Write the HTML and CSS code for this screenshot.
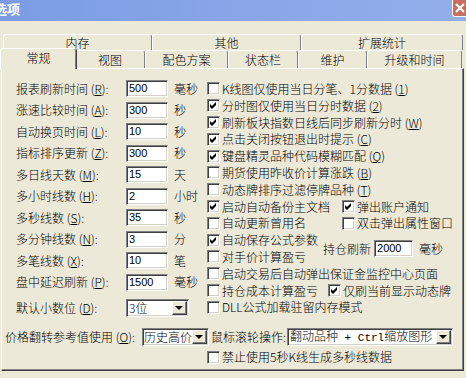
FILE: index.html
```html
<!DOCTYPE html>
<html lang="zh-CN">
<head>
<meta charset="utf-8">
<title>选项</title>
<link rel="stylesheet" href="styles.css">
</head>
<body>
<div class="window">
  <div class="titlebar">
    <span class="title">选项</span>
    <span class="close"><svg width="12" height="12" viewBox="0 0 12 12"><path d="M2 2 L10 10 M10 2 L2 10" stroke="#fff" stroke-width="2"/></svg></span>
  </div>
  <div class="tabs">
    <div class="tabrow back">
      <div class="tab">内存</div>
      <div class="tab">其他</div>
      <div class="tab">扩展统计</div>
    </div>
    <div class="tabrow front">
      <div class="tab sel">常规</div>
      <div class="tab">视图</div>
      <div class="tab">配色方案</div>
      <div class="tab">状态栏</div>
      <div class="tab">维护</div>
      <div class="tab">升级和时间</div>
    </div>
  </div>
  <div class="panel">
    <div class="cols">
      <div class="left">
        <div class="row"><span class="lbl">报表刷新时间 (<u>R</u>):</span><span class="field">500</span><span class="unit">毫秒</span></div>
        <div class="row"><span class="lbl">涨速比较时间 (<u>A</u>):</span><span class="field">300</span><span class="unit">秒</span></div>
        <div class="row"><span class="lbl">自动换页时间 (<u>L</u>):</span><span class="field">10</span><span class="unit">秒</span></div>
        <div class="row"><span class="lbl">指标排序更新 (<u>Z</u>):</span><span class="field">300</span><span class="unit">秒</span></div>
        <div class="row"><span class="lbl">多日线天数 (<u>M</u>):</span><span class="field">15</span><span class="unit">天</span></div>
        <div class="row"><span class="lbl">多小时线数 (<u>H</u>):</span><span class="field">2</span><span class="unit">小时</span></div>
        <div class="row"><span class="lbl">多秒线数 (<u>S</u>):</span><span class="field">35</span><span class="unit">秒</span></div>
        <div class="row"><span class="lbl">多分钟线数 (<u>N</u>):</span><span class="field">3</span><span class="unit">分</span></div>
        <div class="row"><span class="lbl">多笔线数 (<u>X</u>):</span><span class="field">10</span><span class="unit">笔</span></div>
        <div class="row"><span class="lbl">盘中延迟刷新 (<u>P</u>):</span><span class="field">1500</span><span class="unit">毫秒</span></div>
        <div class="row row-dec"><span class="lbl">默认小数位 (<u>D</u>):</span><span class="select s-dec"><span class="val">3位</span><span class="btn"><span class="arrow"></span></span></span></div>
      </div>
      <div class="right">
        <div class="ck"><span class="cb"></span>K线图仅使用当日分笔、1分数据 (<u>1</u>)</div>
        <div class="ck"><span class="cb on"><svg width="7" height="7" viewBox="0 0 7 7"><path d="M0 2 L2 4 L6 0 L6 3 L2 7 L0 5 Z" fill="#000"/></svg></span>分时图仅使用当日分时数据 (<u>2</u>)</div>
        <div class="ck"><span class="cb on"><svg width="7" height="7" viewBox="0 0 7 7"><path d="M0 2 L2 4 L6 0 L6 3 L2 7 L0 5 Z" fill="#000"/></svg></span>刷新板块指数日线后同步刷新分时 (<u>W</u>)</div>
        <div class="ck"><span class="cb on"><svg width="7" height="7" viewBox="0 0 7 7"><path d="M0 2 L2 4 L6 0 L6 3 L2 7 L0 5 Z" fill="#000"/></svg></span>点击关闭按钮退出时提示 (<u>C</u>)</div>
        <div class="ck"><span class="cb on"><svg width="7" height="7" viewBox="0 0 7 7"><path d="M0 2 L2 4 L6 0 L6 3 L2 7 L0 5 Z" fill="#000"/></svg></span>键盘精灵品种代码模糊匹配 (<u>Q</u>)</div>
        <div class="ck"><span class="cb"></span>期货使用昨收价计算涨跌 (<u>B</u>)</div>
        <div class="ck"><span class="cb"></span>动态牌排序过滤停牌品种 (<u>T</u>)</div>
        <div class="pair">
          <div class="ck first"><span class="cb on"><svg width="7" height="7" viewBox="0 0 7 7"><path d="M0 2 L2 4 L6 0 L6 3 L2 7 L0 5 Z" fill="#000"/></svg></span>启动自动备份主文档</div>
          <div class="ck"><span class="cb on"><svg width="7" height="7" viewBox="0 0 7 7"><path d="M0 2 L2 4 L6 0 L6 3 L2 7 L0 5 Z" fill="#000"/></svg></span>弹出账户通知</div>
        </div>
        <div class="pair">
          <div class="ck first"><span class="cb"></span>自动更新曾用名</div>
          <div class="ck"><span class="cb"></span>双击弹出属性窗口</div>
        </div>
        <div class="hold">
          <div class="ck"><span class="cb on"><svg width="7" height="7" viewBox="0 0 7 7"><path d="M0 2 L2 4 L6 0 L6 3 L2 7 L0 5 Z" fill="#000"/></svg></span>自动保存公式参数</div>
          <div class="refresh"><span>持仓刷新</span><span class="field f-hold">2000</span><span class="unit">毫秒</span></div>
          <div class="ck"><span class="cb"></span>对手价计算盈亏</div>
        </div>
        <div class="ck"><span class="cb"></span>启动交易后自动弹出保证金监控中心页面</div>
        <div class="pair">
          <div class="ck first narrow"><span class="cb"></span>持仓成本计算盈亏</div>
          <div class="ck"><span class="cb on"><svg width="7" height="7" viewBox="0 0 7 7"><path d="M0 2 L2 4 L6 0 L6 3 L2 7 L0 5 Z" fill="#000"/></svg></span>仅刷当前显示动态牌</div>
        </div>
        <div class="ck"><span class="cb"></span>DLL公式加载驻留内存模式</div>
      </div>
    </div>
    <div class="flip">
      <span class="lbl-wide">价格翻转参考值使用 (<u>O</u>):</span>
      <span class="select s-hist"><span class="val">历史高价</span><span class="btn"><span class="arrow"></span></span></span>
      <span class="lbl-mid">鼠标滚轮操作:</span>
      <span class="select s-wheel"><span class="val">翻动品种<span class="mono"> + Ctrl</span>缩放图形</span><span class="btn"><span class="arrow"></span></span></span>
    </div>
    <div class="ck last"><span class="cb"></span>禁止使用5秒K线生成多秒线数据</div>
  </div>
</div>
</body>
</html>
```

FILE: styles.css
```css
* { box-sizing: border-box; }
html, body { margin: 0; padding: 0; }
body {
  width: 466px;
  height: 378px;
  overflow: hidden;
  background: #ECE9D8;
  font-family: "Noto Sans CJK SC", "Liberation Sans", sans-serif;
  font-size: 12px;
  font-weight: 300;
  line-height: 14px;
  color: #000;
}
u { text-decoration: underline; text-underline-offset: 1px; }

.titlebar {
  height: 21px;
  background: linear-gradient(to right, #7b9ce4, #8aa7e8 60%, #93aeea);
  display: flex;
  justify-content: space-between;
  align-items: flex-start;
}
.title {
  color: #fff;
  font-weight: bold;
  font-size: 13px;
  line-height: 17px;
  margin-left: -6px;
}
.close {
  width: 14px;
  height: 17px;
  background: #c8705f;
  border-left: 1px solid #fff;
  border-bottom: 1px solid #fff;
  border-radius: 0 0 0 3px;
  display: flex;
  align-items: center;
  justify-content: center;
}

.tabs { margin-top: 13px; }
.tabrow { display: grid; }
.tabrow.back {
  padding-left: 3px;
  grid-template-columns: 149px 149px 162px;
  grid-template-rows: 16px;
}
.tabrow.front {
  padding-left: 2px;
  grid-template-columns: 73px 70px 83px 70px 69px 95px;
  grid-template-rows: 18px;
}
.tab {
  border-top: 1px solid #fff;
  border-left: 1px solid #fff;
  border-right: 1px solid #808080;
  border-radius: 3px 3px 0 0;
  text-align: center;
  background: #ECE9D8;
}
.back .tab { line-height: 15px; }
.front .tab { line-height: 17px; }
.tab.sel {
  position: relative;
  z-index: 1;
  height: 21px;
  margin: -2px -2px -1px -2px;
  line-height: 17px;
  border-right-color: #404040;
  box-shadow: inset -1px 0 #808080;
}

.panel {
  margin-left: 1px;
  width: 463px;
  height: 303px;
  border: 1px solid;
  border-color: #fff #404040 #404040 #fff;
  box-shadow: inset -1px -1px #808080;
}
.cols { display: flex; align-items: flex-start; }
.left {
  width: 205px;
  flex: none;
  padding-top: 9px;
  padding-left: 14px;
}
.row {
  height: 21.5px;
  display: flex;
  align-items: center;
  white-space: nowrap;
}
.lbl { width: 110px; flex: none; }
.field {
  width: 42px;
  height: 17px;
  flex: none;
  background: #fff;
  border: 1px solid;
  border-color: #808080 #fff #fff #808080;
  box-shadow: inset 1px 1px #404040, inset -1px -1px #d4d0c8;
  font-family: "Liberation Sans", sans-serif;
  font-weight: 400;
  font-size: 11px;
  line-height: 15px;
  padding-left: 2px;
}
.unit { margin-left: 6px; }
.row-dec { margin-top: 4.5px; }

.select {
  display: flex;
  align-items: center;
  height: 18px;
  flex: none;
  background: #fff;
  border: 1px solid;
  border-color: #808080 #fff #fff #808080;
  box-shadow: inset 1px 1px #404040, inset -1px -1px #d4d0c8;
  padding: 1px;
}
.select .val { flex: 1; padding-left: 1px; white-space: nowrap; line-height: 14px; }
.select .btn {
  width: 15px;
  height: 14px;
  flex: none;
  background: #ECE9D8;
  border: 1px solid;
  border-color: #fff #404040 #404040 #fff;
  box-shadow: inset -1px -1px #808080;
  display: flex;
  align-items: center;
  justify-content: center;
}
.arrow {
  width: 0;
  height: 0;
  border-left: 4px solid transparent;
  border-right: 4px solid transparent;
  border-top: 4px solid #000;
  margin-right: 1px;
}
.s-dec { width: 63px; }
.s-hist { width: 67px; }
.s-hist .val { padding-left: 0; }
.s-wheel { width: 166px; }
.mono { font-family: "Liberation Mono", monospace; font-size: 11px; font-weight: 400; }

.right { flex: 1; padding-top: 11.6px; }
.ck {
  display: flex;
  align-items: center;
  height: 16.8px;
  white-space: nowrap;
}
.cb {
  width: 13px;
  height: 13px;
  flex: none;
  margin-right: 2px;
  background: #fff;
  border: 1px solid;
  border-color: #808080 #fff #fff #808080;
  box-shadow: inset 1px 1px #404040, inset -1px -1px #d4d0c8;
  display: flex;
  align-items: center;
  justify-content: center;
}
.cb svg { display: block; }
.pair { display: flex; }
.pair .first { width: 135px; flex: none; }
.pair .first.narrow { width: 121px; }

.hold {
  display: grid;
  grid-template-columns: 116px auto;
  grid-template-rows: 16.8px 16.8px;
}
.hold .refresh {
  grid-column: 2;
  grid-row: 1 / span 2;
  display: flex;
  align-items: center;
  white-space: nowrap;
}
.f-hold { width: 39px; margin-left: 3px; }
.hold .ck:last-child { grid-column: 1; grid-row: 2; }

.flip {
  display: flex;
  align-items: center;
  height: 20px;
  margin-top: 7.5px;
  padding-left: 3px;
  white-space: nowrap;
}
.lbl-wide { width: 137px; flex: none; }
.lbl-mid { width: 78px; flex: none; padding-left: 2px; }
.ck.last { margin-top: 2px; padding-left: 205px; height: 17px; }
```
